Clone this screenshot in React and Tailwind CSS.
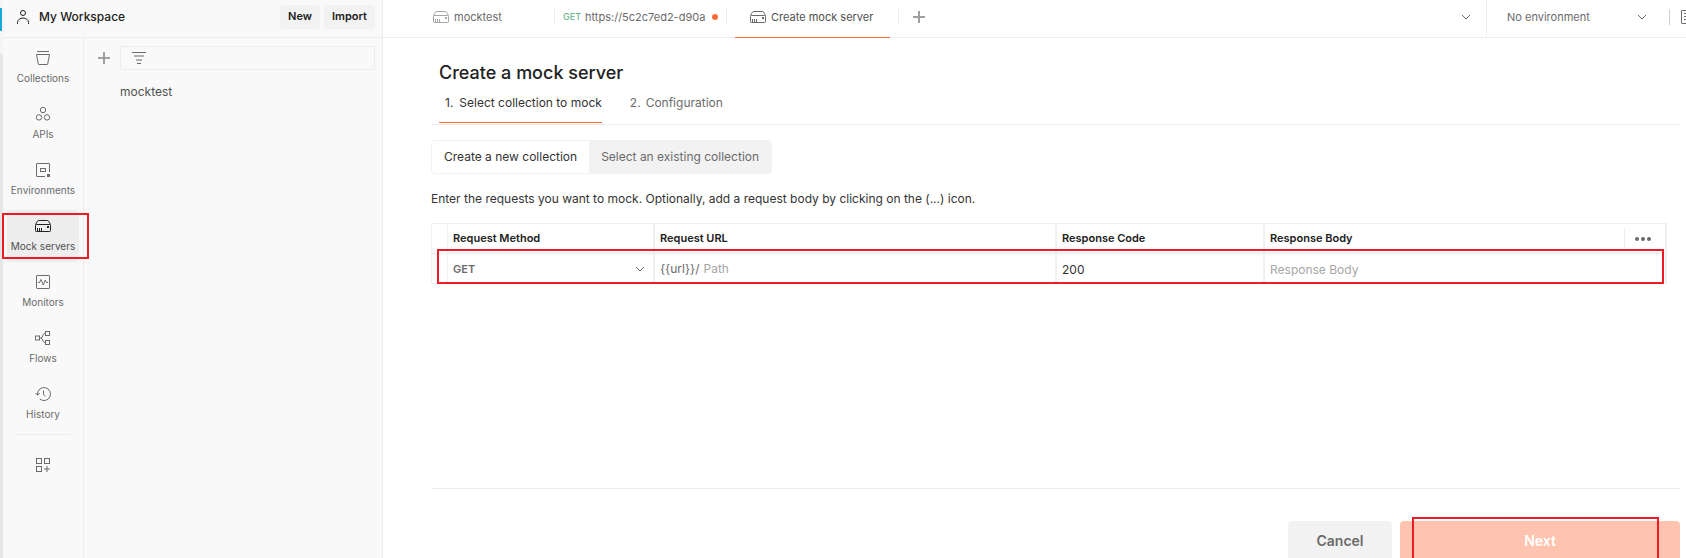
import React from "react";

const Svg = ({ children, className = "", size = 16, box = 16 }) => (
  <svg
    width={size}
    height={size}
    viewBox={`0 0 ${box} ${box}`}
    fill="none"
    stroke="currentColor"
    strokeWidth="1"
    aria-hidden="true"
    className={`shrink-0 ${className}`}
  >
    {children}
  </svg>
);

const CollectionsIcon = () => (
  <Svg>
    <path d="M2 1.5h12M1.5 4.5h13l-1.8 9.4a.7.7 0 0 1-.7.6H4a.7.7 0 0 1-.7-.6z" />
  </Svg>
);

const ApisIcon = () => (
  <Svg>
    <circle cx="8" cy="4" r="2.7" />
    <circle cx="4" cy="11.4" r="2.7" />
    <circle cx="12" cy="11.4" r="2.7" />
  </Svg>
);

const EnvironmentsIcon = () => (
  <Svg>
    <path d="M14.5 10V2a.5.5 0 0 0-.5-.5H2a.5.5 0 0 0-.5.5v12a.5.5 0 0 0 .5.5h8" />
    <rect x="5.5" y="6.5" width="5" height="3" />
    <rect x="12" y="12" width="3" height="3" fill="currentColor" stroke="none" />
  </Svg>
);

const ServerIcon = ({ className }) => (
  <Svg className={className}>
    <path d="M.5 6.5 2.6 2.9a.8.8 0 0 1 .7-.4h9.4c.3 0 .6.2.7.4l2.1 3.6" />
    <rect x=".5" y="6.5" width="15" height="7" rx=".8" />
    <path d="M2.5 10v3M4.5 10v3M6.5 10v3" />
    <rect x="12" y="8" width="2" height="2" fill="currentColor" stroke="none" />
  </Svg>
);

const MonitorsIcon = () => (
  <Svg>
    <rect x="1.5" y="1.5" width="13" height="13" rx=".6" />
    <path d="M3 8.5h1.5l1.4-3 2.4 5.5 2-5 1.2 2.5H13" />
  </Svg>
);

const FlowsIcon = () => (
  <Svg>
    <rect x=".5" y="6" width="4" height="4" />
    <rect x="10.5" y="1.5" width="4" height="4" />
    <rect x="10.5" y="10.5" width="4" height="4" />
    <path d="M4.5 8h2M10.5 3.500h-1C7.500 3.500 8 8 6 8c2 0 1.500 4.500 3.500 4.500h1" />
  </Svg>
);

const HistoryIcon = () => (
  <Svg>
    <path d="M2.500 9V8a6.500 6.500 0 1 1 2.300 5M.500 7l2 2.200L4.700 7M8.500 4.500v4l2 1.500" />
  </Svg>
);

const GridPlusIcon = () => (
  <Svg>
    <rect x="1.500" y="1.500" width="5" height="5" />
    <rect x="9.500" y="1.500" width="5" height="5" />
    <rect x="1.500" y="9.500" width="5" height="5" />
    <path d="M12 9v6M9 12h6" />
  </Svg>
);

const UserIcon = () => (
  <Svg>
    <circle cx="8" cy="4" r="2.500" />
    <path d="M2.500 15v-1.500a5.500 4.500 0 0 1 11 0V15" />
  </Svg>
);

const PlusIcon = () => (
  <Svg className="text-[#a0a0a0]">
    <path d="M8 2v12M2 8h12" strokeWidth="2" />
  </Svg>
);

const FilterIcon = () => (
  <Svg className="text-[#6b6b6b]">
    <path d="M1 2.500h14M3 6h10M5 10h6M6 13.500h4" />
  </Svg>
);

const Chevron = ({ className }) => (
  <Svg size={12} box={12} className={className}>
    <path d="m2 4 4 4 4-4" />
  </Svg>
);

const NAV = [
  { label: "Collections", Icon: CollectionsIcon },
  { label: "APIs", Icon: ApisIcon },
  { label: "Environments", Icon: EnvironmentsIcon },
  { label: "Mock servers", Icon: ServerIcon, active: true },
  { label: "Monitors", Icon: MonitorsIcon },
  { label: "Flows", Icon: FlowsIcon },
  { label: "History", Icon: HistoryIcon },
];

function NavRail() {
  return (
    <nav className="flex w-[81px] shrink-0 flex-col items-center gap-1 border-r border-[#ededed] pt-1">
      {NAV.map(({ label, Icon, active }) => (
        <div key={label} className="relative">
          <button
            type="button"
            className={`flex h-[52px] w-18 flex-col items-center gap-1 rounded pt-2 text-[10px] leading-[17px] whitespace-nowrap ${
              active ? "bg-[#ededed] text-[#212121]" : "text-[#6b6b6b]"
            }`}
          >
            <Icon />
            <span className={active ? "text-[#505050]" : ""}>{label}</span>
          </button>
          {active && (
            <span className="pointer-events-none absolute top-[3px] -right-2.5 bottom-[3px] -left-[5px] border-2 border-[#ed1c24]" />
          )}
        </div>
      ))}
      <hr className="w-14 border-[#ededed]" />
      <button type="button" aria-label="Configure sidebar" className="mt-[18px] text-[#6b6b6b]">
        <GridPlusIcon />
      </button>
    </nav>
  );
}

function Sidebar() {
  return (
    <aside className="flex w-[380px] shrink-0 flex-col border-r border-[#ededed] bg-[#f9f9f9]">
      <header className="flex h-[38px] shrink-0 items-center gap-1 border-b border-[#ededed] pr-[7px] pb-1 pl-3 text-xs">
        <UserIcon />
        <span className="flex-1 pl-1 font-medium text-[#212121]">My Workspace</span>
        <button type="button" className="h-6 rounded bg-[#f2f2f2] px-2 text-[11px] font-semibold">
          New
        </button>
        <button type="button" className="h-6 rounded bg-[#f2f2f2] px-2 text-[11px] font-semibold">
          Import
        </button>
      </header>
      <div className="flex flex-1">
        <NavRail />
        <section className="flex-1 pt-2 pr-[7px] pl-3">
          <div className="flex items-center gap-2">
            <button type="button" aria-label="Create mock server">
              <PlusIcon />
            </button>
            <label className="flex h-6 flex-1 items-center gap-2 rounded-xs border border-[#ededed] pl-2.5">
              <FilterIcon />
              <input aria-label="Filter" className="min-w-0 flex-1 text-xs outline-none" />
            </label>
          </div>
          <a href="#mocktest" className="mt-3.5 ml-6 block text-xs leading-4 text-[#505050]">
            mocktest
          </a>
        </section>
      </div>
    </aside>
  );
}

const Separator = ({ className = "bg-[#ededed]" }) => <span className={`mt-[9px] h-4 w-px shrink-0 ${className}`} />;

function TabBar() {
  return (
    <header className="flex h-[38px] shrink-0 border-b border-[#ededed] text-[11px] leading-[34px] text-[#6b6b6b]">
      <button type="button" className="flex h-[34px] w-[171px] shrink-0 items-center gap-[5px] pl-[50px]">
        <ServerIcon className="text-[#a6a6a6]" />
        mocktest
      </button>
      <Separator />
      <button type="button" className="flex h-[34px] w-[171px] shrink-0 items-center gap-1 pl-2 whitespace-nowrap">
        <span className="text-[9px] font-medium text-[#6bb78c]">GET</span>
        https://5c2c7ed2-d90a
        <span className="ml-[3px] size-1.5 rounded-full bg-[#ff6c37]" />
      </button>
      <Separator />
      <button
        type="button"
        className="ml-2 flex h-[38px] w-[155px] shrink-0 items-center gap-[5px] border-b border-[#ff6c37] pb-[3px] pl-[15px] text-[#505050]"
      >
        <ServerIcon className="text-[#6b6b6b]" />
        Create mock server
      </button>
      <Separator className="ml-2 bg-[#ededed]" />
      <button type="button" aria-label="New tab" className="ml-3 flex h-[34px] items-center">
        <PlusIcon />
      </button>
      <button type="button" aria-label="All tabs" className="mr-3.5 ml-auto flex h-[34px] items-center">
        <Chevron />
      </button>
      <div className="relative flex w-[183px] shrink-0 items-center border-l border-[#ededed] pb-1">
        <select aria-label="Environment" className="h-full w-full appearance-none pl-5 outline-none">
          <option>No environment</option>
        </select>
        <Chevron className="pointer-events-none absolute top-[11px] right-[21px]" />
      </div>
      <Separator className="bg-[#cfcfcf]" />
      <div className="flex h-[34px] w-4 shrink-0 items-center overflow-hidden pl-2.5">
        <Svg>
          <rect x="1.500" y="1.500" width="13" height="13" rx=".600" />
          <path d="M4 4.500h8M4 7.500h8M4 10.500h8" />
        </Svg>
      </div>
    </header>
  );
}

const TH = "border-t border-r-2 border-b-2 border-[#f0f0f0] pl-[5px] text-left text-[11px] font-semibold text-[#212121]";
const TD = "border-r-2 border-b border-[#f0f0f0] pl-[5px]";

function RequestTable() {
  return (
    <div className="relative mt-4 mr-[13px]">
      <table className="w-full table-fixed border-separate border-spacing-0 text-xs text-[#6b6b6b]">
        <colgroup>
          <col className="w-[17px]" />
          <col className="w-[207px]" />
          <col />
          <col className="w-[208px]" />
          <col />
        </colgroup>
        <thead>
          <tr className="h-[31px]">
            <td className="border border-[#f0f0f0]" />
            <th className={TH}>Request Method</th>
            <th className={TH}>Request URL</th>
            <th className={TH}>Response Code</th>
            <th className={TH}>
              <div className="flex items-center justify-between">
                Response Body
                <button
                  type="button"
                  aria-label="More options"
                  className="flex h-5 w-[41px] items-center border-l border-[#ededed] pt-px pl-2.5 text-[#6b6b6b]"
                >
                  <Svg>
                    <g fill="currentColor" stroke="none">
                      <circle cx="2" cy="8" r="2" />
                      <circle cx="8" cy="8" r="2" />
                      <circle cx="14" cy="8" r="2" />
                    </g>
                  </Svg>
                </button>
              </div>
            </th>
          </tr>
        </thead>
        <tbody>
          <tr className="h-[30px]">
            <td className="border-x border-b border-[#f0f0f0]" />
            <td className={TD}>
              <div className="relative">
                <select
                  aria-label="Request Method"
                  className="block w-full appearance-none text-[11px] leading-4 font-semibold outline-none"
                >
                  <option>GET</option>
                </select>
                <Chevron className="pointer-events-none absolute top-0.5 right-[7px]" />
              </div>
            </td>
            <td className={TD}>
              <div className="flex gap-1">
                <span>{"{{url}}/"}</span>
                <input
                  aria-label="Path"
                  placeholder="Path"
                  className="min-w-0 flex-1 outline-none placeholder:text-[#a6a6a6]"
                />
              </div>
            </td>
            <td className={`${TD} pt-0.5`}>
              <input aria-label="Response Code" defaultValue="200" className="block w-full text-[#333] outline-none" />
            </td>
            <td className={`${TD} pt-0.5`}>
              <input
                aria-label="Response Body"
                placeholder="Response Body"
                className="block w-full outline-none placeholder:text-[#a6a6a6]"
              />
            </td>
          </tr>
        </tbody>
      </table>
      <span className="pointer-events-none absolute top-[26px] right-[3px] bottom-0 left-1.5 border-2 border-[#ed1c24]" />
    </div>
  );
}

export default function App() {
  return (
    <div className="flex h-screen overflow-hidden bg-white font-['Inter',sans-serif] text-[#212121]">
      <div className="w-[3px] shrink-0 bg-[#e6e6e6]">
        <div className="h-[54px] bg-[#f5f5f5] pt-2">
          <div className="h-[23px] w-0.5 bg-[#1ba8dc]" />
        </div>
      </div>
      <Sidebar />
      <div className="flex min-w-0 flex-1 flex-col">
        <TabBar />
        <main className="flex flex-1 flex-col pr-1.5 pl-12">
          <h1 className="mt-[23px] pl-2 text-lg leading-6 font-medium">Create a mock server</h1>
          <ol className="mt-2 flex h-8 border-b border-[#ededed] pl-2 text-xs leading-5 text-[#6b6b6b]">
            <li className="h-[30px] border-b border-[#ff6c37] pl-1.5 text-[#333]">
              <span className="mr-1.5">1.</span>Select collection to mock
            </li>
            <li className="ml-7">
              <span className="mr-[5px]">2.</span>Configuration
            </li>
          </ol>
          <div className="mt-[15px] flex h-[34px] self-start rounded border border-[#f2f2f2] bg-[#f2f2f2] text-xs">
            <button type="button" className="rounded-l bg-white px-3 text-[#333]">
              Create a new collection
            </button>
            <button type="button" className="px-3 text-[#6b6b6b]">
              Select an existing collection
            </button>
          </div>
          <p className="mt-4 text-xs leading-[17px] text-[#333]">
            Enter the requests you want to mock. Optionally, add a request body by clicking on the (...) icon.
          </p>
          <RequestTable />
          <footer className="mt-auto flex h-[70px] justify-end gap-2 border-t border-[#ededed] pt-8 text-sm font-semibold">
            <button type="button" className="h-10 w-[104px] rounded bg-[#f2f2f2] text-[#6b6b6b]">
              Cancel
            </button>
            <div className="relative h-10">
              <button type="button" className="h-10 w-[280px] rounded bg-[#ffc4af] text-white">
                Next
              </button>
              <span className="pointer-events-none absolute -top-1 right-[21px] -bottom-1 left-3 border-2 border-[#ed1c24]" />
            </div>
          </footer>
        </main>
      </div>
    </div>
  );
}
